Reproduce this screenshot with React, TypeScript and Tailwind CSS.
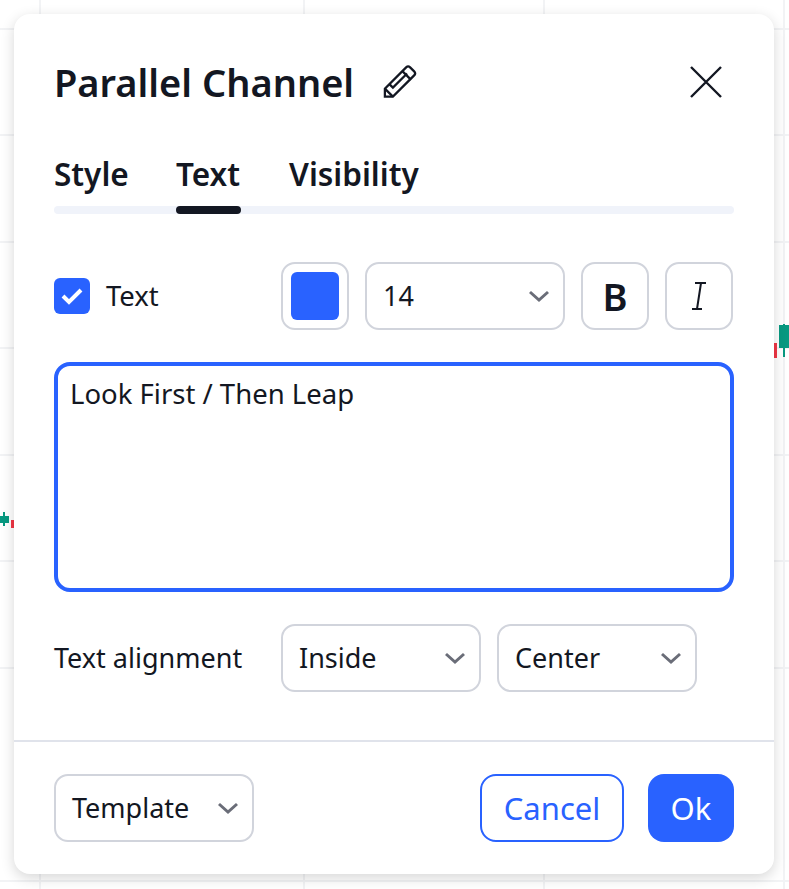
import React from "react";

const font = { fontFamily: '"Noto Sans", sans-serif' };

function Chevron() {
  return (
    <svg width="22" height="14" viewBox="0 0 22 14" fill="none" className="shrink-0">
      <path d="M2 3l9 8 9-8" stroke="#6a6d78" strokeWidth="3" />
    </svg>
  );
}

function Select({ label, width }: { label: string; width: string }) {
  return (
    <div className={`${width} h-[68px] shrink-0 border-2 border-[#d1d4dc] rounded-[14px] flex items-center justify-between pl-4 pr-[13px] text-[#131722] text-[27px]`}>
      <span>{label}</span>
      <Chevron />
    </div>
  );
}

function ChartBackground() {
  const xs = [40, 304, 544, 784];
  const ys = [29, 135, 242, 348, 455, 561, 668, 881];
  return (
    <svg width="789" height="889" className="absolute inset-0">
      {xs.map((x) => (
        <rect key={x} x={x - 1} y="0" width="2" height="889" fill="#f2f3f5" />
      ))}
      {ys.map((y) => (
        <rect key={y} x="0" y={y - 1} width="789" height="2" fill="#f2f3f5" />
      ))}
      <rect x="0" y="516" width="9" height="7" fill="#089981" />
      <rect x="3" y="512" width="2" height="14" fill="#089981" />
      <rect x="11" y="520" width="3" height="8" fill="#f23645" />
      <rect x="774" y="343" width="3" height="15" fill="#f23645" />
      <rect x="779" y="325" width="10" height="23" fill="#089981" />
      <rect x="783" y="324" width="2" height="33" fill="#089981" />
    </svg>
  );
}

export default function App() {
  return (
    <div className="relative w-[789px] h-[889px] overflow-hidden bg-white" style={font}>
      <ChartBackground />
      <div className="relative p-[14px]">
        <div className="w-[760px] h-[860px] bg-white rounded-[16px] shadow-[0_4px_14px_rgba(0,0,0,0.16)] flex flex-col">
          <div className="px-10 flex flex-col flex-1">
            <div className="h-[68px] mt-[34px] flex items-center text-[#131722]">
              <span className="text-[38px] font-semibold leading-none">Parallel Channel</span>
              <svg width="34" height="34" viewBox="0 0 36 36" fill="none" className="ml-[29px]" stroke="#131722" strokeWidth="2.4">
                <path d="M2 33.5V25L24.5 2.5a3 3 0 0 1 4.2 0l4.3 4.3a3 3 0 0 1 0 4.2L10.5 33.5z" />
                <path d="M2.5 25.5l8 8M20.5 6.5l9 9M7 20.5l3.5 3.5 15-15" />
              </svg>
              <svg width="34" height="34" viewBox="0 0 34 34" fill="none" className="ml-auto mr-[11px]" stroke="#131722" strokeWidth="2.4">
                <path d="M2 2l30 30M32 2L2 32" />
              </svg>
            </div>

            <div className="mt-[26px] flex text-[#131722] text-[31.5px] font-semibold h-[64px] items-center">
              <span className="w-[122px]">Style</span>
              <span className="w-[113px]">Text</span>
              <span>Visibility</span>
            </div>
            <div className="h-2 rounded bg-[#f0f3fa]">
              <div className="ml-[122px] w-[65px] h-2 rounded bg-[#131722]" />
            </div>

            <div className="mt-12 h-[68px] flex items-center">
              <div className="w-[36px] h-[36px] rounded-[6px] bg-[#2962ff] flex items-center justify-center">
                <svg width="22" height="18" viewBox="0 0 22 18" fill="none" stroke="#ffffff" strokeWidth="4">
                  <path d="M2 9l6 6L20 3" />
                </svg>
              </div>
              <span className="ml-4 text-[27.5px] text-[#131722] w-[175px]">Text</span>
              <div className="w-[68px] h-[68px] border-2 border-[#d1d4dc] rounded-[14px] flex items-center justify-center">
                <div className="w-12 h-12 rounded-[6px] bg-[#2962ff]" />
              </div>
              <div className="ml-4">
                <Select label="14" width="w-[200px]" />
              </div>
              <div className="ml-4 w-[68px] h-[68px] border-2 border-[#d1d4dc] rounded-[14px] flex items-center justify-center">
                <span className="text-[38px] font-semibold text-[#131722] leading-none">B</span>
              </div>
              <div className="ml-4 w-[68px] h-[68px] border-2 border-[#d1d4dc] rounded-[14px] flex items-center justify-center">
                <svg width="16" height="30" viewBox="0 0 16 30" fill="none" stroke="#131722" strokeWidth="2">
                  <path d="M4 2h11M1 28h10M10 2L6 28" />
                </svg>
              </div>
            </div>

            <div className="mt-8 h-[230px] border-4 border-[#2962ff] rounded-[16px] px-3 pt-2 text-[27.5px] leading-[40px] text-[#131722]">
              Look First / Then Leap
            </div>

            <div className="mt-8 h-[68px] flex items-center">
              <span className="w-[227px] text-[27px] text-[#131722]">Text alignment</span>
              <Select label="Inside" width="w-[200px]" />
              <div className="ml-4">
                <Select label="Center" width="w-[200px]" />
              </div>
            </div>
          </div>

          <div className="h-[2px] bg-[#e0e3eb]" />

          <div className="h-[132px] px-10 pt-8 flex items-start">
            <Select label="Template" width="w-[200px]" />
            <div className="ml-auto w-[144px] h-[68px] border-2 border-[#2962ff] rounded-[16px] flex items-center justify-center text-[#2962ff] text-[31px]">
              Cancel
            </div>
            <div className="ml-6 w-[86px] h-[68px] bg-[#2962ff] rounded-[16px] flex items-center justify-center text-white text-[31px]">
              Ok
            </div>
          </div>
        </div>
      </div>
    </div>
  );
}
